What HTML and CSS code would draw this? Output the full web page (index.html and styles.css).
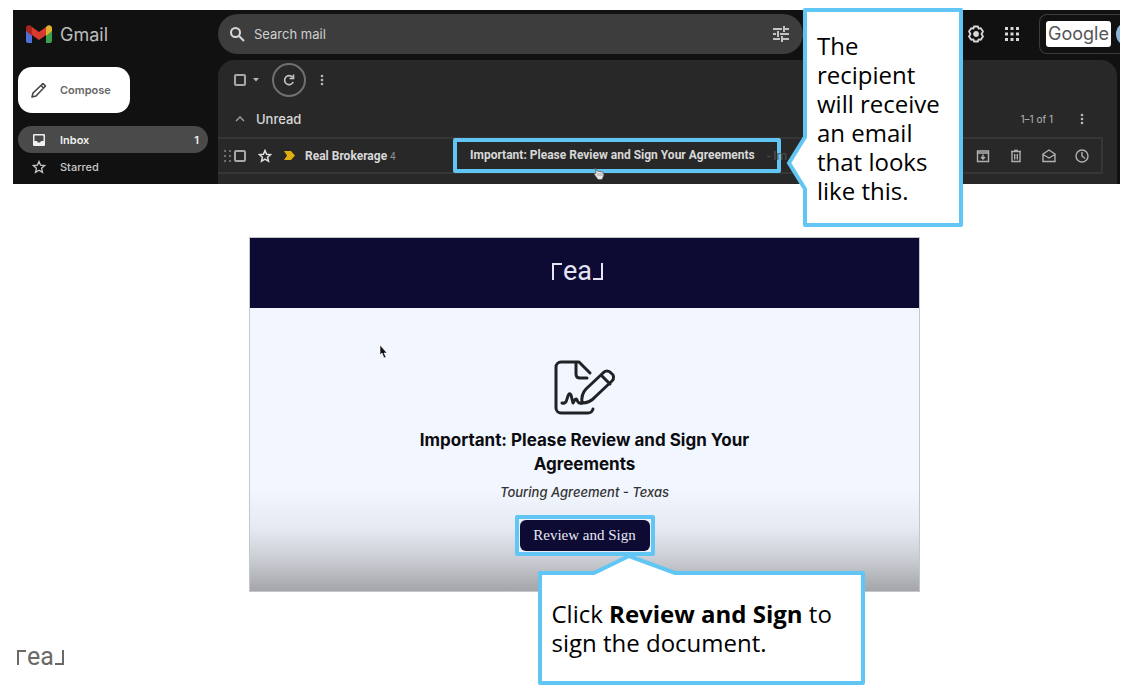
FILE: index.html
```html
<!DOCTYPE html>
<html lang="en">
<head>
    <meta charset="UTF-8">
    <title>Review and Sign Your Agreements</title>
    <link rel="stylesheet" href="styles.css">
</head>
<body>
    <main class="slide">

        <!-- Inbox strip -->
        <section class="inbox">
            <div class="gmail">
                <header class="topbar">
                    <a class="brand" href="#">
                        <svg width="26" height="20" viewBox="0 0 26 20">
                            <path fill="#4f6fdc" d="M0 4h6v15H2a2 2 0 0 1-2-2z"/>
                            <path fill="#3c9f4c" d="M20 4h6v13a2 2 0 0 1-2 2h-4z"/>
                            <path fill="#e0b02c" d="M20 8V3c2-3 6-2 6 1v3l-6 5z"/>
                            <path fill="#a82820" d="M6 8V3C4 0 0 1 0 4v3l6 5z"/>
                            <path fill="#d93a2f" d="M6 3l7 5 7-5v8l-7 5-7-5z"/>
                        </svg>
                        <span>Gmail</span>
                    </a>
                    <div class="search">
                        <svg width="17" height="17" viewBox="0 0 17 17" fill="none" stroke="#d8d8d8" stroke-width="2"><circle cx="6.5" cy="6.5" r="4.5"/><path d="M10 10l5 5"/></svg>
                        <input type="text" aria-label="Search mail" placeholder="Search mail">
                        <button class="icon-btn" aria-label="Search options">
                            <svg width="16" height="16" viewBox="0 0 16 16" fill="none" stroke="#c4c4c4" stroke-width="2"><path d="M0 3h9M12 3h4M11 0v6M0 8h3M7 8h9M5 5v6M0 13h7M10 13h6M9 10v6"/></svg>
                        </button>
                    </div>
                    <div class="top-actions">
                        <button class="icon-btn" aria-label="Settings">
                            <svg width="18" height="18" viewBox="0 0 18 18" fill="none" stroke="#d8d8d8" stroke-width="1.8" stroke-linejoin="round"><path d="M7 1.5h4l.6 2.2 2.2-.5 2.2 3.4L14.5 9l1.5 2.4-2.2 3.4-2.2-.5L11 16.5H7l-.6-2.2-2.2.5L2 11.4 3.5 9 2 6.6l2.2-3.4 2.2.5z"/><circle cx="9" cy="9" r="2" fill="#d8d8d8"/></svg>
                        </button>
                        <button class="icon-btn" aria-label="Apps">
                            <svg width="14" height="14" viewBox="0 0 14 14" fill="#d8d8d8"><path d="M0 0h3v3H0zM5.5 0h3v3h-3zM11 0h3v3h-3zM0 5.5h3v3H0zM5.5 5.5h3v3h-3zM11 5.5h3v3h-3zM0 11h3v3H0zM5.5 11h3v3h-3zM11 11h3v3h-3z"/></svg>
                        </button>
                        <div class="account"><span class="google">Google</span><span class="avatar"></span></div>
                    </div>
                </header>

                <div class="columns">
                    <nav class="sidebar">
                        <button class="compose">
                            <svg width="16" height="16" viewBox="0 0 16 16" fill="none" stroke="#444" stroke-width="1.6" stroke-linejoin="round"><path d="M1 15l1-4L12 1.5 14.5 4 5 14zM10 3.5L12.5 6"/></svg>
                            Compose
                        </button>
                        <a class="folder active" href="#">
                            <svg width="14" height="14" viewBox="0 0 14 14"><path fill="#f0f0f0" fill-rule="evenodd" d="M2 1h10a1 1 0 0 1 1 1v10a1 1 0 0 1-1 1H2a1 1 0 0 1-1-1V2a1 1 0 0 1 1-1zm.5 1.5V8H5c.5 2 3.5 2 4 0h2.5V2.5z"/></svg>
                            <span>Inbox</span><span class="count">1</span>
                        </a>
                        <a class="folder" href="#">
                            <svg width="14" height="14" viewBox="0 0 14 14" fill="none" stroke="#c8c8c8" stroke-width="1.3"><path d="M7 1.5l1.6 3.7 4 .4-3 2.7.9 4L7 10.2l-3.5 2.1.9-4-3-2.7 4-.4z"/></svg>
                            <span>Starred</span>
                        </a>
                    </nav>

                    <div class="panel">
                        <div class="toolbar">
                            <input type="checkbox" aria-label="Select all">
                            <svg class="caret" width="6" height="4" viewBox="0 0 6 4"><path fill="#b8b8b8" d="M0 0h6L3 3.5z"/></svg>
                            <button class="refresh" aria-label="Refresh">
                                <svg width="14" height="14" viewBox="0 0 14 14" fill="none" stroke="#c4c4c4" stroke-width="1.6"><path d="M11.2 9A4.5 4.5 0 1 1 10.5 4.2M11.5 1.5v4h-4"/></svg>
                            </button>
                            <button class="icon-btn" aria-label="More">
                                <svg width="4" height="12" viewBox="0 0 4 12" fill="#b8b8b8"><circle cx="2" cy="2" r="1.3"/><circle cx="2" cy="6" r="1.3"/><circle cx="2" cy="10" r="1.3"/></svg>
                            </button>
                        </div>
                        <div class="section-head">
                            <svg width="10" height="6" viewBox="0 0 10 6" fill="none" stroke="#a0a0a0" stroke-width="1.4"><path d="M1 5l4-4 4 4"/></svg>
                            <span class="section-title">Unread</span>
                            <span class="range">1–1 of 1</span>
                            <svg width="4" height="12" viewBox="0 0 4 12" fill="#b8b8b8"><circle cx="2" cy="2" r="1.3"/><circle cx="2" cy="6" r="1.3"/><circle cx="2" cy="10" r="1.3"/></svg>
                        </div>
                        <div class="mail-row">
                            <svg class="grip" width="7" height="12" viewBox="0 0 7 12" fill="#707070"><path d="M0 0h2v2H0zM5 0h2v2H5zM0 5h2v2H0zM5 5h2v2H5zM0 10h2v2H0zM5 10h2v2H5z"/></svg>
                            <input type="checkbox" aria-label="Select message">
                            <svg class="star" width="14" height="14" viewBox="0 0 14 14" fill="none" stroke="#e0e0e0" stroke-width="1.5"><path d="M7 1.5l1.6 3.7 4 .4-3 2.7.9 4L7 10.2l-3.5 2.1.9-4-3-2.7 4-.4z"/></svg>
                            <svg class="marker" width="11" height="9" viewBox="0 0 11 9"><path fill="#dfae10" d="M0 0h7l4 4.5L7 9H0l3-4.5z"/></svg>
                            <span class="sender">Real Brokerage <small>4</small></span>
                            <span class="subject">Important: Please Review and Sign Your Agreements</span>
                            <span class="snippet">- Im</span>
                            <span class="row-actions">
                                <button class="icon-btn" aria-label="Archive"><svg width="14" height="14" viewBox="0 0 14 14" fill="none" stroke="#b0b0b0" stroke-width="1.4"><path d="M1.5 2h11v10.5h-11zM1.5 4h11M7 5.5v4M5 8l2 2 2-2"/></svg></button>
                                <button class="icon-btn" aria-label="Delete"><svg width="14" height="14" viewBox="0 0 14 14" fill="none" stroke="#b0b0b0" stroke-width="1.4"><path d="M2 2.5h10M5 1.5h4M3 3v9.5h8V3M5.7 5v5.5M8.3 5v5.5"/></svg></button>
                                <button class="icon-btn" aria-label="Mark as read"><svg width="14" height="14" viewBox="0 0 14 14" fill="none" stroke="#b0b0b0" stroke-width="1.4"><path d="M1 5l6-4 6 4v7.5H1zM1 5.5l6 3.5 6-3.5"/></svg></button>
                                <button class="icon-btn" aria-label="Snooze"><svg width="14" height="14" viewBox="0 0 14 14" fill="none" stroke="#b0b0b0" stroke-width="1.4"><circle cx="7" cy="7" r="6"/><path d="M7 3v4l3 2.5"/></svg></button>
                            </span>
                            <svg class="hand" width="12" height="12" viewBox="0 0 12 12"><path fill="#e8e8e8" stroke="#555" stroke-width=".7" d="M2 0l2 3 6 1 1 3-2 4.5H5L1 6l1-1 1 .5z"/><path stroke="#888" stroke-width=".7" d="M5 5v3M7 5v3M9 5v3"/></svg>
                        </div>
                    </div>
                </div>
            </div>

            <aside class="callout callout-left">
                <p>The recipient will receive an email that looks like this.</p>
                <svg class="tip" width="21" height="58" viewBox="0 0 21 58"><path fill="#fff" d="M21 2L19 2 3 29l16 27h2z"/><path fill="none" stroke="#62c6f4" stroke-width="4" d="M19 0v2L3 28l16 26v4"/></svg>
            </aside>
        </section>

        <!-- Email preview -->
        <section class="preview">
            <article class="email">
                <header class="email-head">
                    <div class="logo" role="img" aria-label="real"><i class="corner"></i>ea<i class="corner end"></i></div>
                </header>
                <div class="email-body">
                    <svg class="sign-icon" width="62" height="56" viewBox="0 0 62 56" fill="none" stroke="#202226" stroke-width="3" stroke-linecap="round" stroke-linejoin="round">
                        <path d="M36 13L25 2H7a5 5 0 0 0-5 5v41a5 5 0 0 0 5 5h27q4 0 5-4M22 2v12q0 4 4 4h7"/>
                        <path d="M28 43q-1-9 4-14L49 13a5 5 0 0 1 8 0 5 5 0 0 1 1 8L41 37q-5 6-13 6zM47 15l9 9"/>
                        <path d="M8 43q4 1 5-4 2-8 4-4l2 8q3-6 4-3 1 4 5 3"/>
                    </svg>
                    <h1>Important: Please Review and Sign Your Agreements</h1>
                    <p class="doc-name">Touring Agreement - Texas</p>
                    <div class="cta">
                        <button class="cta-btn">Review and Sign</button>
                        <aside class="callout callout-below">
                            <p>Click <b>Review and Sign</b> to sign the document.</p>
                            <svg class="tip" width="88" height="21" viewBox="0 0 88 21"><path fill="#fff" d="M1 21v-2L37 3l50 16v2z"/><path fill="none" stroke="#62c6f4" stroke-width="4" d="M0 19h2L37 2l46 17h5"/></svg>
                        </aside>
                    </div>
                </div>
                <svg class="arrow" width="9" height="14" viewBox="0 0 9 14"><path fill="#111" stroke="#fff" stroke-width=".6" d="M1 0v10l2-2 2 5 2-1-2-4h3z"/></svg>
            </article>
        </section>

        <footer class="foot">
            <div class="logo small" role="img" aria-label="real"><i class="corner"></i>ea<i class="corner end"></i></div>
        </footer>
    </main>
</body>
</html>
```
FILE: styles.css
```css
* {
    box-sizing: border-box;
}

body {
    margin: 0;
    background: #fff;
    font-family: Inter, sans-serif;
}

button {
    font-family: inherit;
    border: none;
    cursor: pointer;
}

a {
    color: inherit;
    text-decoration: none;
}

svg {
    display: block;
    flex: none;
}

.slide {
    min-height: 100vh;
    padding: 10px 20px 0 13px;
}

/* Inbox strip */
.inbox {
    position: relative;
}

.gmail {
    height: 174px;
    overflow: hidden;
    background: #111;
    color: #d8d8d8;
    font-size: 11px;
}

.topbar {
    display: flex;
    align-items: center;
    height: 50px;
    padding-bottom: 2px;
}

.brand {
    display: flex;
    align-items: center;
    gap: 8px;
    width: 205px;
    padding-left: 13px;
    font-size: 18px;
    color: #bdbdbd;
}

.search {
    flex: 1;
    display: flex;
    align-items: center;
    height: 40px;
    padding: 0 14px 0 11px;
    border-radius: 20px;
    background: #3d3d3d;
}

.search input {
    flex: 1;
    min-width: 0;
    padding: 0 8px;
    border: none;
    outline: none;
    background: none;
    font-family: inherit;
    font-size: 13px;
    color: #d8d8d8;
}

.search input::placeholder {
    color: #d0d0d0;
}

.icon-btn {
    padding: 0;
    background: none;
}

.top-actions {
    flex: none;
    display: flex;
    align-items: center;
    justify-content: flex-end;
    gap: 20px;
    width: 317px;
}

.account {
    display: flex;
    align-items: center;
    gap: 5px;
    width: 81px;
    height: 40px;
    padding-left: 6px;
    overflow: hidden;
    border: 1px solid #3c3c3c;
    border-right: none;
    border-radius: 8px 0 0 8px;
}

.google {
    flex: none;
    width: 65px;
    border-radius: 3px;
    background: #fff;
    color: #555;
    font-size: 18px;
    line-height: 26px;
    text-align: center;
}

.avatar {
    flex: none;
    width: 24px;
    height: 24px;
    border-radius: 50%;
    background: #8fb4d8;
}

.columns {
    display: flex;
    padding-right: 3px;
}

.sidebar {
    width: 205px;
    padding: 7px 10px 0 5px;
}

.compose {
    display: flex;
    align-items: center;
    gap: 13px;
    height: 46px;
    margin-bottom: 13px;
    padding: 0 19px 0 13px;
    border-radius: 14px;
    background: #fff;
    color: #666;
    font-size: 11px;
    font-weight: 600;
}

.folder {
    display: flex;
    align-items: center;
    gap: 14px;
    height: 27px;
    padding: 0 9px 0 14px;
    border-radius: 14px;
    font-size: 11px;
    font-weight: 500;
    color: #c8c8c8;
}

.folder.active {
    background: #4a4a4a;
    color: #f0f0f0;
    font-weight: 600;
}

.count {
    margin-left: auto;
}

.panel {
    flex: 1;
    height: 140px;
    border-radius: 16px 16px 0 0;
    background: #282828;
}

.panel input {
    appearance: none;
    flex: none;
    width: 12px;
    height: 12px;
    margin: 0;
    border: 2px solid #a8a8a8;
    border-radius: 2px;
}

.toolbar {
    display: flex;
    align-items: center;
    height: 40px;
    padding-left: 16px;
}

.caret {
    margin: 0 13px 0 7px;
}

.refresh {
    display: flex;
    align-items: center;
    justify-content: center;
    width: 34px;
    height: 34px;
    margin-right: 14px;
    border: 2px solid #707070;
    border-radius: 50%;
    padding: 0;
    background: none;
}

.section-head {
    display: flex;
    align-items: center;
    height: 37px;
    padding: 1px 33px 0 17px;
}

.section-title {
    margin-left: 11px;
    font-size: 13px;
    font-weight: 500;
}

.range {
    margin: 0 27px 0 auto;
    font-size: 10px;
    color: #b8b8b8;
}

.mail-row {
    position: relative;
    display: flex;
    align-items: center;
    height: 37px;
    margin-right: 14px;
    padding: 0 12px 0 6px;
    border: 2px solid #353638;
    border-left: none;
    font-family: Roboto, sans-serif;
    font-size: 12px;
    font-weight: 700;
}

.grip {
    margin-right: 3px;
}

.star {
    margin: 0 12px;
}

.marker {
    margin-right: 10px;
}

.sender {
    flex: none;
    width: 148px;
}

.sender small {
    font-size: 10px;
    font-weight: 400;
    color: #909090;
}

.subject {
    flex: none;
    width: 328px;
    padding: 0 13px;
    border: 4px solid #62c6f4;
    border-radius: 2px;
    line-height: 27px;
    white-space: nowrap;
}

/* the tail of the snippet runs up to the callout */
.snippet {
    flex: none;
    margin-left: -14px;
    color: #555;
    font-weight: 400;
}

.row-actions {
    display: flex;
    gap: 19px;
    margin-left: auto;
}

.hand {
    position: absolute;
    left: 375px;
    bottom: -8px;
}

/* Callouts */
.callout {
    position: absolute;
    border: 4px solid #62c6f4;
    border-radius: 2px;
    background: #fff;
    color: #000;
    font-family: "Open Sans", sans-serif;
    font-size: 24px;
    line-height: 29px;
    text-align: left;
}

.callout p {
    margin: 0;
}

.tip {
    position: absolute;
}

.callout-left {
    top: -2px;
    right: 157px;
    width: 160px;
    padding: 19px 10px 18px;
}

.callout-left .tip {
    left: -21px;
    top: 123px;
}

/* Email preview */
.preview {
    padding: 53px 0 0 36px;
}

.email {
    position: relative;
    max-width: 671px;
    margin: 0 auto;
    border: 1px solid #c4c6cc;
}

.email-head {
    display: flex;
    align-items: center;
    justify-content: center;
    height: 70px;
    padding: 0 14px 4px 0;
    background: #0d0b33;
    color: #e4e4f4;
}

.logo {
    display: inline-flex;
    align-items: baseline;
    font-family: Roboto, sans-serif;
    font-size: 27px;
    line-height: 30px;
}

.corner {
    width: 10px;
    height: 17px;
    margin-right: 1px;
    border-top: 2px solid;
    border-left: 2px solid;
}

.corner.end {
    margin: 0 0 0 1px;
    border: none;
    border-right: 2px solid;
    border-bottom: 2px solid;
}

.logo.small {
    font-size: 25px;
    color: #6b6965;
}

.logo.small .corner {
    width: 9px;
    height: 15px;
}

.email-body {
    display: flex;
    flex-direction: column;
    align-items: center;
    padding: 52px 120px 35px;
    background: linear-gradient(#f2f6ff 0%, #f2f6ff 64%, #e6e9f2 78%, #cccfd5 88%, #a3a5a8 100%);
    text-align: center;
}

.email-body h1 {
    max-width: 360px;
    margin: 12px 0 6px;
    font-size: 17px;
    line-height: 24px;
    color: #0c0c10;
}

.doc-name {
    margin: 0 0 13px;
    font-size: 13px;
    line-height: 20px;
    font-style: italic;
    font-weight: 500;
    color: #333;
}

.cta {
    position: relative;
    border: 4px solid #62c6f4;
    border-radius: 2px;
    padding: 1px;
    background: #eceff6;
}

.cta-btn {
    display: block;
    width: 130px;
    height: 31px;
    padding: 0;
    border-radius: 6px;
    background: #0d0b33;
    color: #e8e8f4;
    font-family: "Liberation Serif", serif;
    font-size: 15px;
}

.callout-below {
    left: 19px;
    top: 52px;
    width: 327px;
    padding: 24px 10px;
}

.callout-below .tip {
    left: 50px;
    top: -21px;
}

.arrow {
    position: absolute;
    left: 129px;
    top: 107px;
}

.foot {
    padding: 50px 0 0 4px;
}
```
